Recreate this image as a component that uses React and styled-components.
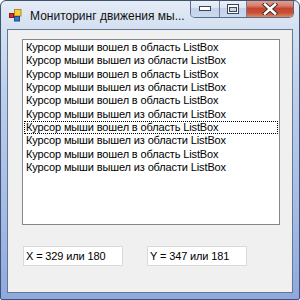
import React from "react";
import styled, { createGlobalStyle } from "styled-components";

const Global = createGlobalStyle`
  html, body { margin: 0; padding: 0; background: #ffffff; }
  * { box-sizing: border-box; }
`;

const Window = styled.div`
  width: 300px;
  height: 300px;
  display: flex;
  flex-direction: column;
  border: 1px solid #3f526f;
  border-radius: 6px 6px 2px 2px;
  background: linear-gradient(
    180deg,
    #e4ecf6 0px,
    #d3e0f1 28px,
    #bccfec 90px,
    #a6bde7 200px,
    #8fa9df 100%
  );
  overflow: hidden;
`;

const TitleBar = styled.div`
  height: 28px;
  display: flex;
  align-items: flex-start;
  padding: 0 5px 0 8px;
`;

const AppIcon = styled.svg`
  width: 13px;
  height: 13px;
  margin-top: 8px;
  flex-shrink: 0;
`;

const Title = styled.div`
  margin: 7px 0 0 8px;
  font-family: "Liberation Sans", Arial, sans-serif;
  font-size: 12px;
  line-height: 16px;
  color: #111;
  white-space: nowrap;
  flex: 1;
  min-width: 0;
  overflow: hidden;
`;

const Caption = styled.div`
  display: flex;
  height: 18px;
  flex-shrink: 0;
  margin-top: -1px;
  border: 1px solid #5b6b86;
  border-top: none;
  border-radius: 0 0 5px 5px;
  overflow: hidden;
`;

const CapButton = styled.div`
  width: ${(p) => p.$w}px;
  height: 100%;
  display: flex;
  align-items: center;
  justify-content: center;
  border-left: ${(p) => (p.$first ? "none" : "1px solid #6d7d98")};
  background: ${(p) =>
    p.$close
      ? "linear-gradient(180deg, #e3a596 0%, #d77c69 35%, #c4452f 50%, #c84f35 75%, #de8a66 100%)"
      : "linear-gradient(180deg, #eef3fa 0%, #dbe5f3 45%, #c4d3ea 50%, #cbd9ef 100%)"};
`;

const ClientFrame = styled.div`
  flex: 1;
  margin: 0 6px 6px 6px;
  border: 1px solid #66768f;
  background: #f0f0f0;
  padding: 9px 12px 0 14px;
  display: flex;
  flex-direction: column;
`;

const ListBox = styled.div`
  width: 258px;
  height: 186px;
  border: 1px solid #828790;
  background: #ffffff;
  padding: 1px;
`;

const Item = styled.div`
  height: 13.33px;
  line-height: 13px;
  padding-left: 2px;
  font-family: "Liberation Sans", Arial, sans-serif;
  font-size: 11px;
  letter-spacing: -0.13px;
  color: #000;
  white-space: nowrap;
  outline: ${(p) => (p.$focus ? "1px dotted #000" : "none")};
  outline-offset: -1px;
`;

const Row = styled.div`
  display: flex;
  gap: 24px;
  margin-top: 21px;
  padding-left: 1px;
`;

const TextBox = styled.div`
  width: 100px;
  height: 20px;
  border: 1px solid #dadada;
  background: #fff;
  padding-left: 2px;
  display: flex;
  align-items: center;
  font-family: "Liberation Sans", Arial, sans-serif;
  font-size: 11px;
  letter-spacing: -0.13px;
  color: #000;
  white-space: nowrap;
`;

const items = Array.from({ length: 10 }, (_, i) =>
  i % 2 === 0
    ? "Курсор мыши вошел в область ListBox"
    : "Курсор мыши вышел из области ListBox"
);

export default function App() {
  return (
    <>
      <Global />
      <Window>
        <TitleBar>
          <AppIcon viewBox="0 0 13 13">
            <rect x="0.5" y="4.5" width="4" height="4" fill="#d8322a" stroke="#8a1a14" strokeWidth="1" />
            <rect x="5.5" y="0.5" width="6.5" height="6.5" fill="#f7cd3a" stroke="#b48a14" strokeWidth="1" />
            <rect x="5.5" y="7.5" width="5" height="4.5" fill="#3b73c8" stroke="#1f4a8c" strokeWidth="1" />
          </AppIcon>
          <Title>Мониторинг движения мы...</Title>
          <Caption>
            <CapButton $w={28} $first>
              <svg width="12" height="5" viewBox="0 0 12 5">
                <rect x="0.5" y="0.5" width="11" height="4" fill="#fff" stroke="#3b4658" />
              </svg>
            </CapButton>
            <CapButton $w={27}>
              <svg width="12" height="10" viewBox="0 0 12 10">
                <rect x="0.5" y="0.5" width="11" height="9" fill="#fff" stroke="#3b4658" />
                <rect x="2.5" y="3.5" width="7" height="4" fill="#c9d6ea" stroke="#3b4658" />
              </svg>
            </CapButton>
            <CapButton $w={47} $close>
              <svg width="16" height="12" viewBox="0 0 16 12">
                <path d="M3 1.5 L13 10.5 M13 1.5 L3 10.5" stroke="#3a2a28" strokeWidth="4.4" strokeLinecap="square" />
                <path d="M3 1.5 L13 10.5 M13 1.5 L3 10.5" stroke="#ffffff" strokeWidth="2.6" strokeLinecap="square" />
              </svg>
            </CapButton>
          </Caption>
        </TitleBar>
        <ClientFrame>
          <ListBox>
            {items.map((t, i) => (
              <Item key={i} $focus={i === 6}>
                {t}
              </Item>
            ))}
          </ListBox>
          <Row>
            <TextBox>X = 329 или 180</TextBox>
            <TextBox>Y = 347 или 181</TextBox>
          </Row>
        </ClientFrame>
      </Window>
    </>
  );
}
